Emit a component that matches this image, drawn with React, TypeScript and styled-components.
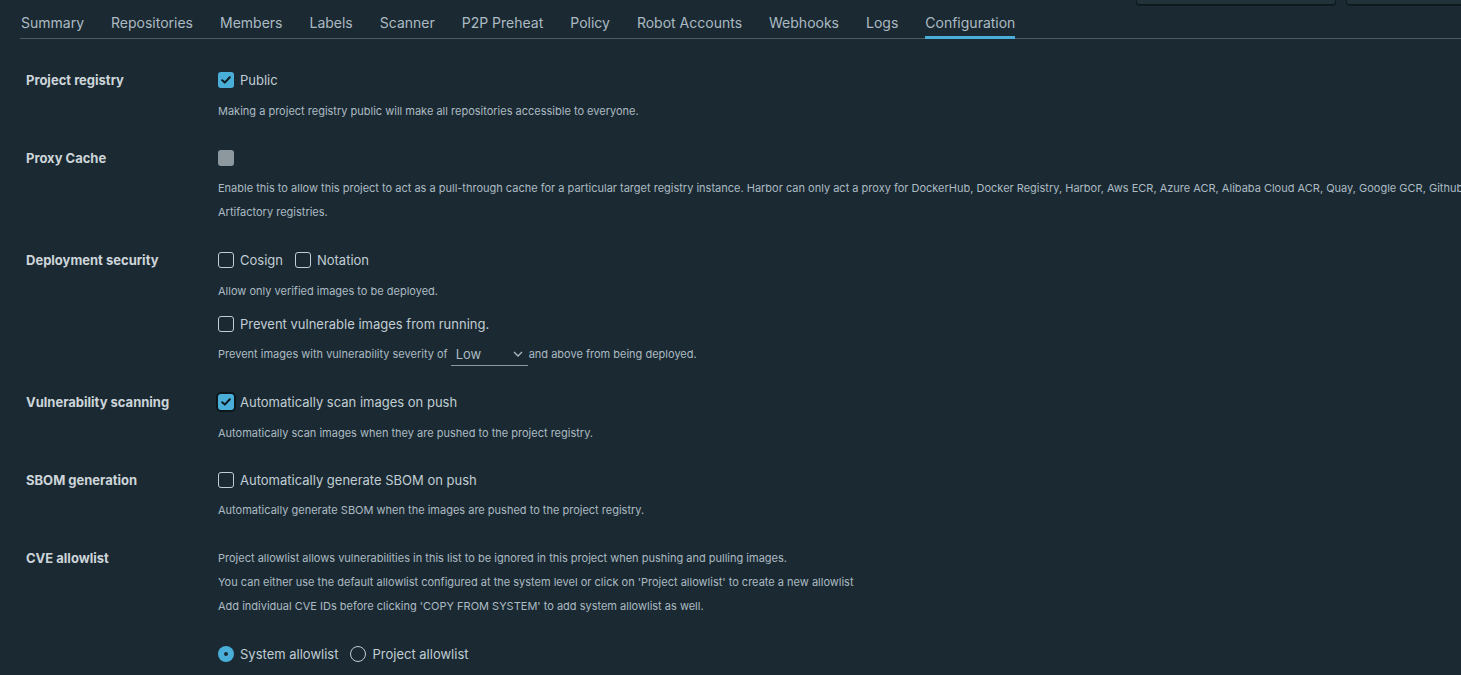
import React from 'react';
import styled, { createGlobalStyle } from 'styled-components';

const Global = createGlobalStyle`
  html, body { margin: 0; padding: 0; background: #1b2a32; overflow: hidden; }
  body { font-family: Inter, "Noto Sans", sans-serif; }
`;

const Page = styled.div`
  padding: 0 0 40px 20px;
  background: #1b2a32;
  min-height: 675px;
  box-sizing: border-box;
`;

const HeaderStrip = styled.div`
  height: 6px;
  overflow: hidden;
  display: flex;
  align-items: flex-end;
  justify-content: flex-end;
  gap: 10px;
`;

const GhostButton = styled.div<{ $w: number }>`
  flex: none;
  width: ${p => p.$w}px;
  height: 36px;
  box-sizing: border-box;
  background: #21323a;
  border: 1px solid #0f1a1f;
  border-bottom-width: 2px;
  border-radius: 4px;
  &:last-child { margin-right: -20px; }
`;

const TabBar = styled.nav`
  display: flex;
  gap: 27px;
  height: 32px;
  padding-left: 1px;
  border-bottom: 1px solid #4c5c66;
`;

const Tab = styled.div<{ $active?: boolean }>`
  height: 33px;
  display: flex;
  align-items: center;
  font-size: 14px;
  color: #acbac3;
  box-shadow: ${p => (p.$active ? 'inset 0 -3px 0 #49afd9' : 'none')};
  white-space: nowrap;
`;

const Form = styled.div`
  padding: 29px 0 0 6px;
`;

const Section = styled.section<{ $gapTop?: number }>`
  display: grid;
  grid-template-columns: 192px 1fr;
  margin-top: ${p => p.$gapTop ?? 0}px;
`;

const SectionLabel = styled.div`
  font-size: 13px;
  font-weight: 700;
  line-height: 24px;
  color: #cdd5da;
`;

const Controls = styled.div<{ $gapTop?: number }>`
  display: flex;
  flex-direction: column;
  margin-top: ${p => p.$gapTop ?? 0}px;
`;

const ControlRow = styled.div<{ $gapTop?: number }>`
  display: flex;
  align-items: center;
  height: 24px;
  gap: 12px;
  margin-top: ${p => p.$gapTop ?? 0}px;
`;

const CheckItem = styled.label`
  display: inline-flex;
  align-items: center;
  gap: 6px;
  font-size: 13px;
  color: #c1cdd4;
  white-space: nowrap;
`;

const Box = styled.span<{ $checked?: boolean; $disabled?: boolean; $focus?: boolean }>`
  width: 16px;
  height: 16px;
  box-sizing: border-box;
  border-radius: 3px;
  display: inline-flex;
  align-items: center;
  justify-content: center;
  flex: none;
  background: ${p => (p.$checked ? '#49afd9' : p.$disabled ? '#8c979e' : 'transparent')};
  border: ${p => (p.$checked || p.$disabled ? 'none' : '1px solid #c1cdd4')};
  box-shadow: ${p => (p.$focus ? '0 0 0 2px #0c161b' : 'none')};
`;

const Radio = styled.span<{ $checked?: boolean }>`
  width: 16px;
  height: 16px;
  box-sizing: border-box;
  border-radius: 50%;
  display: inline-flex;
  align-items: center;
  justify-content: center;
  flex: none;
  background: ${p => (p.$checked ? '#49afd9' : 'transparent')};
  border: ${p => (p.$checked ? 'none' : '1px solid #c1cdd4')};
  &::after {
    content: '';
    display: ${p => (p.$checked ? 'block' : 'none')};
    width: 4px;
    height: 4px;
    border-radius: 50%;
    background: #1b2a32;
  }
`;

const Helper = styled.div<{ $gapTop?: number }>`
  font-size: 11px;
  line-height: 24px;
  color: #acbac3;
  margin-top: ${p => p.$gapTop ?? 7}px;
  white-space: nowrap;
  display: flex;
  align-items: center;
`;

const HelperLine = styled.div`
  font-size: 11px;
  line-height: 24px;
  color: #acbac3;
  white-space: nowrap;
`;

const Select = styled.span`
  display: inline-flex;
  align-items: center;
  justify-content: space-between;
  box-sizing: border-box;
  width: 77px;
  height: 24px;
  margin: 0 1px 0 3px;
  padding: 0 5px 0 5px;
  border-bottom: 1px solid #8c9aa3;
  font-size: 13px;
  color: #acbac3;
`;

const Check = () => (
  <svg width="10" height="8" viewBox="0 0 10 8">
    <polyline points="1.2,4.2 3.8,6.6 8.8,1.2" fill="none" stroke="#0f1a20" strokeWidth="2" strokeLinecap="round" strokeLinejoin="round" />
  </svg>
);

const Chevron = () => (
  <svg width="10" height="6" viewBox="0 0 10 6">
    <polyline points="1,1 5,5 9,1" fill="none" stroke="#acbac3" strokeWidth="1.3" />
  </svg>
);

const tabs = ['Summary', 'Repositories', 'Members', 'Labels', 'Scanner', 'P2P Preheat', 'Policy', 'Robot Accounts', 'Webhooks', 'Logs', 'Configuration'];

export default function App() {
  return (
    <>
      <Global />
      <Page>
        <HeaderStrip>
          <GhostButton $w={200} />
          <GhostButton $w={135} />
        </HeaderStrip>
        <TabBar>
          {tabs.map(t => (
            <Tab key={t} $active={t === 'Configuration'}>{t}</Tab>
          ))}
        </TabBar>
        <Form>
          <Section>
            <SectionLabel>Project registry</SectionLabel>
            <Controls>
              <ControlRow>
                <CheckItem><Box $checked><Check /></Box>Public</CheckItem>
              </ControlRow>
              <Helper>Making a project registry public will make all repositories accessible to everyone.</Helper>
            </Controls>
          </Section>

          <Section $gapTop={23}>
            <SectionLabel>Proxy Cache</SectionLabel>
            <Controls>
              <ControlRow>
                <CheckItem><Box $disabled /></CheckItem>
              </ControlRow>
              <Controls $gapTop={6}>
                <HelperLine>Enable this to allow this project to act as a pull-through cache for a particular target registry instance. Harbor can only act a proxy for DockerHub, Docker Registry, Harbor, Aws ECR, Azure ACR, Alibaba Cloud ACR, Quay, Google GCR, Github GHCR, and JFrog</HelperLine>
                <HelperLine>Artifactory registries.</HelperLine>
              </Controls>
            </Controls>
          </Section>

          <Section $gapTop={24}>
            <SectionLabel>Deployment security</SectionLabel>
            <Controls>
              <ControlRow>
                <CheckItem><Box />Cosign</CheckItem>
                <CheckItem><Box />Notation</CheckItem>
              </ControlRow>
              <Helper>Allow only verified images to be deployed.</Helper>
              <ControlRow $gapTop={9}>
                <CheckItem><Box />Prevent vulnerable images from running.</CheckItem>
              </ControlRow>
              <Helper $gapTop={6}>
                Prevent images with vulnerability severity of
                <Select>Low<Chevron /></Select>
                and above from being deployed.
              </Helper>
            </Controls>
          </Section>

          <Section $gapTop={24}>
            <SectionLabel>Vulnerability scanning</SectionLabel>
            <Controls>
              <ControlRow>
                <CheckItem><Box $checked $focus><Check /></Box>Automatically scan images on push</CheckItem>
              </ControlRow>
              <Helper>Automatically scan images when they are pushed to the project registry.</Helper>
            </Controls>
          </Section>

          <Section $gapTop={23}>
            <SectionLabel>SBOM generation</SectionLabel>
            <Controls>
              <ControlRow>
                <CheckItem><Box />Automatically generate SBOM on push</CheckItem>
              </ControlRow>
              <Helper $gapTop={6}>Automatically generate SBOM when the images are pushed to the project registry.</Helper>
            </Controls>
          </Section>

          <Section $gapTop={24}>
            <SectionLabel>CVE allowlist</SectionLabel>
            <Controls>
              <HelperLine>Project allowlist allows vulnerabilities in this list to be ignored in this project when pushing and pulling images.</HelperLine>
              <HelperLine>You can either use the default allowlist configured at the system level or click on 'Project allowlist' to create a new allowlist</HelperLine>
              <HelperLine>Add individual CVE IDs before clicking 'COPY FROM SYSTEM' to add system allowlist as well.</HelperLine>
              <ControlRow $gapTop={24}>
                <CheckItem><Radio $checked />System allowlist</CheckItem>
                <CheckItem><Radio />Project allowlist</CheckItem>
              </ControlRow>
            </Controls>
          </Section>
        </Form>
      </Page>
    </>
  );
}
